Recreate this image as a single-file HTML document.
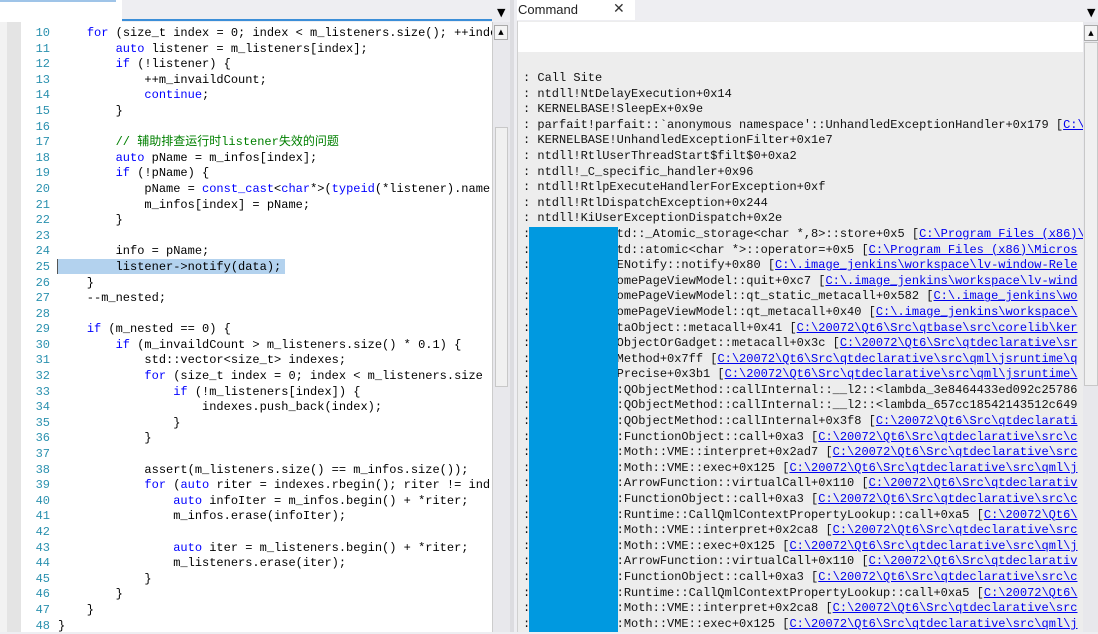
<!DOCTYPE html>
<html><head><meta charset="utf-8"><style>
body{margin:0;width:1098px;height:632px;overflow:hidden;background:#eeeef2;position:relative;font-family:"Liberation Mono",monospace}
.a{position:absolute}
.code{position:absolute;left:0;top:26px;font-size:12px;line-height:15.6px;white-space:pre;color:#000}
.ln{display:inline-block;width:50px;text-align:right;color:#2b91af;margin-right:8px}
.k{color:#0000ff}.c{color:#008000}
.cmd{position:absolute;left:523px;top:71px;font-size:12px;line-height:15.6px;white-space:pre;color:#111}
.u{color:#0000ee;text-decoration:underline}
</style></head><body>
<div class="a" style="left:0;top:0;width:512px;height:20px;background:#eeeef2"></div>
<div class="a" style="left:0;top:0;width:122px;height:22px;background:#fff"></div>
<div class="a" style="left:0;top:0;width:116px;height:2px;background:#9fc4e8"></div>
<div class="a" style="left:122px;top:19px;width:370px;height:2px;background:#3b8ed8"></div>
<div class="a" style="left:497px;top:6px;font-size:11px;font-family:'DejaVu Sans'">&#9660;</div>
<div class="a" style="left:0;top:22px;width:7px;height:610px;background:#f2f2f2"></div>
<div class="a" style="left:7px;top:22px;width:14px;height:610px;background:#e4e4e4"></div>
<div class="a" style="left:21px;top:22px;width:471px;height:610px;background:#fff"></div>
<div class="a" style="left:57px;top:259px;width:228px;height:15px;background:#b3d2ee"></div>
<div class="a" style="left:57px;top:259px;width:1px;height:15px;background:#555"></div>
<div class="code" style="width:492px;overflow:hidden"><span class="ln">10</span>    <span class="k">for</span> (size_t index = 0; index &lt; m_listeners.size(); ++index
<span class="ln">11</span>        <span class="k">auto</span> listener = m_listeners[index];
<span class="ln">12</span>        <span class="k">if</span> (!listener) {
<span class="ln">13</span>            ++m_invaildCount;
<span class="ln">14</span>            <span class="k">continue</span>;
<span class="ln">15</span>        }
<span class="ln">16</span>
<span class="ln">17</span>        <span class="c">// 辅助排查运行时listener失效的问题</span>
<span class="ln">18</span>        <span class="k">auto</span> pName = m_infos[index];
<span class="ln">19</span>        <span class="k">if</span> (!pName) {
<span class="ln">20</span>            pName = <span class="k">const_cast</span>&lt;<span class="k">char</span>*&gt;(<span class="k">typeid</span>(*listener).name
<span class="ln">21</span>            m_infos[index] = pName;
<span class="ln">22</span>        }
<span class="ln">23</span>
<span class="ln">24</span>        info = pName;
<span class="ln">25</span>        listener-&gt;notify(data);
<span class="ln">26</span>    }
<span class="ln">27</span>    --m_nested;
<span class="ln">28</span>
<span class="ln">29</span>    <span class="k">if</span> (m_nested == 0) {
<span class="ln">30</span>        <span class="k">if</span> (m_invaildCount &gt; m_listeners.size() * 0.1) {
<span class="ln">31</span>            std::vector&lt;size_t&gt; indexes;
<span class="ln">32</span>            <span class="k">for</span> (size_t index = 0; index &lt; m_listeners.size
<span class="ln">33</span>                <span class="k">if</span> (!m_listeners[index]) {
<span class="ln">34</span>                    indexes.push_back(index);
<span class="ln">35</span>                }
<span class="ln">36</span>            }
<span class="ln">37</span>
<span class="ln">38</span>            assert(m_listeners.size() == m_infos.size());
<span class="ln">39</span>            <span class="k">for</span> (<span class="k">auto</span> riter = indexes.rbegin(); riter != ind
<span class="ln">40</span>                <span class="k">auto</span> infoIter = m_infos.begin() + *riter;
<span class="ln">41</span>                m_infos.erase(infoIter);
<span class="ln">42</span>
<span class="ln">43</span>                <span class="k">auto</span> iter = m_listeners.begin() + *riter;
<span class="ln">44</span>                m_listeners.erase(iter);
<span class="ln">45</span>            }
<span class="ln">46</span>        }
<span class="ln">47</span>    }
<span class="ln">48</span>}</div>
<div class="a" style="left:492px;top:22px;width:17px;height:610px;background:#e8e8ec;border-left:1px solid #ccc"></div>
<div class="a" style="left:494px;top:25px;width:12px;height:13px;background:#f4f4f4;border:1px solid #aaa;font-size:7px;text-align:center;line-height:13px;font-family:'DejaVu Sans'">&#9650;</div>
<div class="a" style="left:495px;top:127px;width:11px;height:258px;background:#f0f0f0;border:1px solid #c8c8c8"></div>
<div class="a" style="left:510px;top:0;width:4px;height:632px;background:#dcdce0"></div>
<div class="a" style="left:517px;top:0;width:118px;height:20px;background:#fff"></div>
<div class="a" style="left:518px;top:2px;font-family:'Liberation Sans',sans-serif;font-size:13px;color:#222">Command</div>
<div class="a" style="left:613px;top:1px;font-family:'DejaVu Sans';font-size:14px;color:#333">&#x2715;</div>
<div class="a" style="left:1087px;top:6px;font-size:11px;font-family:'DejaVu Sans'">&#9660;</div>
<div class="a" style="left:517px;top:21px;width:566px;height:611px;background:#ededed;border-left:1px solid #d0d0d0"></div>
<div class="a" style="left:518px;top:22px;width:565px;height:30px;background:#fff"></div>
<div class="a" style="left:1083px;top:22px;width:15px;height:610px;background:#e8e8ec"></div>
<div class="a" style="left:1084px;top:25px;width:12px;height:14px;background:#f4f4f4;border:1px solid #aaa;font-size:7px;text-align:center;line-height:14px;font-family:'DejaVu Sans'">&#9650;</div>
<div class="a" style="left:1084px;top:42px;width:12px;height:342px;background:#f0f0f0;border:1px solid #c8c8c8"></div>
<div class="cmd" style="width:560px;overflow:hidden">: Call Site
: ntdll!NtDelayExecution+0x14
: KERNELBASE!SleepEx+0x9e
: parfait!parfait::`anonymous namespace'::UnhandledExceptionHandler+0x179 [<span class="u">C:\</span>
: KERNELBASE!UnhandledExceptionFilter+0x1e7
: ntdll!RtlUserThreadStart$filt$0+0xa2
: ntdll!_C_specific_handler+0x96
: ntdll!RtlpExecuteHandlerForException+0xf
: ntdll!RtlDispatchException+0x244
: ntdll!KiUserExceptionDispatch+0x2e
:            td::_Atomic_storage&lt;char *,8&gt;::store+0x5 [<span class="u">C:\Program Files (x86)\</span>
:            td::atomic&lt;char *&gt;::operator=+0x5 [<span class="u">C:\Program Files (x86)\Micros</span>
:            ENotify::notify+0x80 [<span class="u">C:\.image_jenkins\workspace\lv-window-Rele</span>
:            omePageViewModel::quit+0xc7 [<span class="u">C:\.image_jenkins\workspace\lv-wind</span>
:            omePageViewModel::qt_static_metacall+0x582 [<span class="u">C:\.image_jenkins\wo</span>
:            omePageViewModel::qt_metacall+0x40 [<span class="u">C:\.image_jenkins\workspace\</span>
:            taObject::metacall+0x41 [<span class="u">C:\20072\Qt6\Src\qtbase\src\corelib\ker</span>
:            ObjectOrGadget::metacall+0x3c [<span class="u">C:\20072\Qt6\Src\qtdeclarative\sr</span>
:            Method+0x7ff [<span class="u">C:\20072\Qt6\Src\qtdeclarative\src\qml\jsruntime\q</span>
:            Precise+0x3b1 [<span class="u">C:\20072\Qt6\Src\qtdeclarative\src\qml\jsruntime\</span>
:            :QObjectMethod::callInternal::__l2::&lt;lambda_3e8464433ed092c25786
:            :QObjectMethod::callInternal::__l2::&lt;lambda_657cc18542143512c649
:            :QObjectMethod::callInternal+0x3f8 [<span class="u">C:\20072\Qt6\Src\qtdeclarati</span>
:            :FunctionObject::call+0xa3 [<span class="u">C:\20072\Qt6\Src\qtdeclarative\src\c</span>
:            :Moth::VME::interpret+0x2ad7 [<span class="u">C:\20072\Qt6\Src\qtdeclarative\src</span>
:            :Moth::VME::exec+0x125 [<span class="u">C:\20072\Qt6\Src\qtdeclarative\src\qml\j</span>
:            :ArrowFunction::virtualCall+0x110 [<span class="u">C:\20072\Qt6\Src\qtdeclarativ</span>
:            :FunctionObject::call+0xa3 [<span class="u">C:\20072\Qt6\Src\qtdeclarative\src\c</span>
:            :Runtime::CallQmlContextPropertyLookup::call+0xa5 [<span class="u">C:\20072\Qt6\</span>
:            :Moth::VME::interpret+0x2ca8 [<span class="u">C:\20072\Qt6\Src\qtdeclarative\src</span>
:            :Moth::VME::exec+0x125 [<span class="u">C:\20072\Qt6\Src\qtdeclarative\src\qml\j</span>
:            :ArrowFunction::virtualCall+0x110 [<span class="u">C:\20072\Qt6\Src\qtdeclarativ</span>
:            :FunctionObject::call+0xa3 [<span class="u">C:\20072\Qt6\Src\qtdeclarative\src\c</span>
:            :Runtime::CallQmlContextPropertyLookup::call+0xa5 [<span class="u">C:\20072\Qt6\</span>
:            :Moth::VME::interpret+0x2ca8 [<span class="u">C:\20072\Qt6\Src\qtdeclarative\src</span>
:            :Moth::VME::exec+0x125 [<span class="u">C:\20072\Qt6\Src\qtdeclarative\src\qml\j</span></div>
<div class="a" style="left:529px;top:227px;width:89px;height:405px;background:#0099e0"></div>
</body></html>
